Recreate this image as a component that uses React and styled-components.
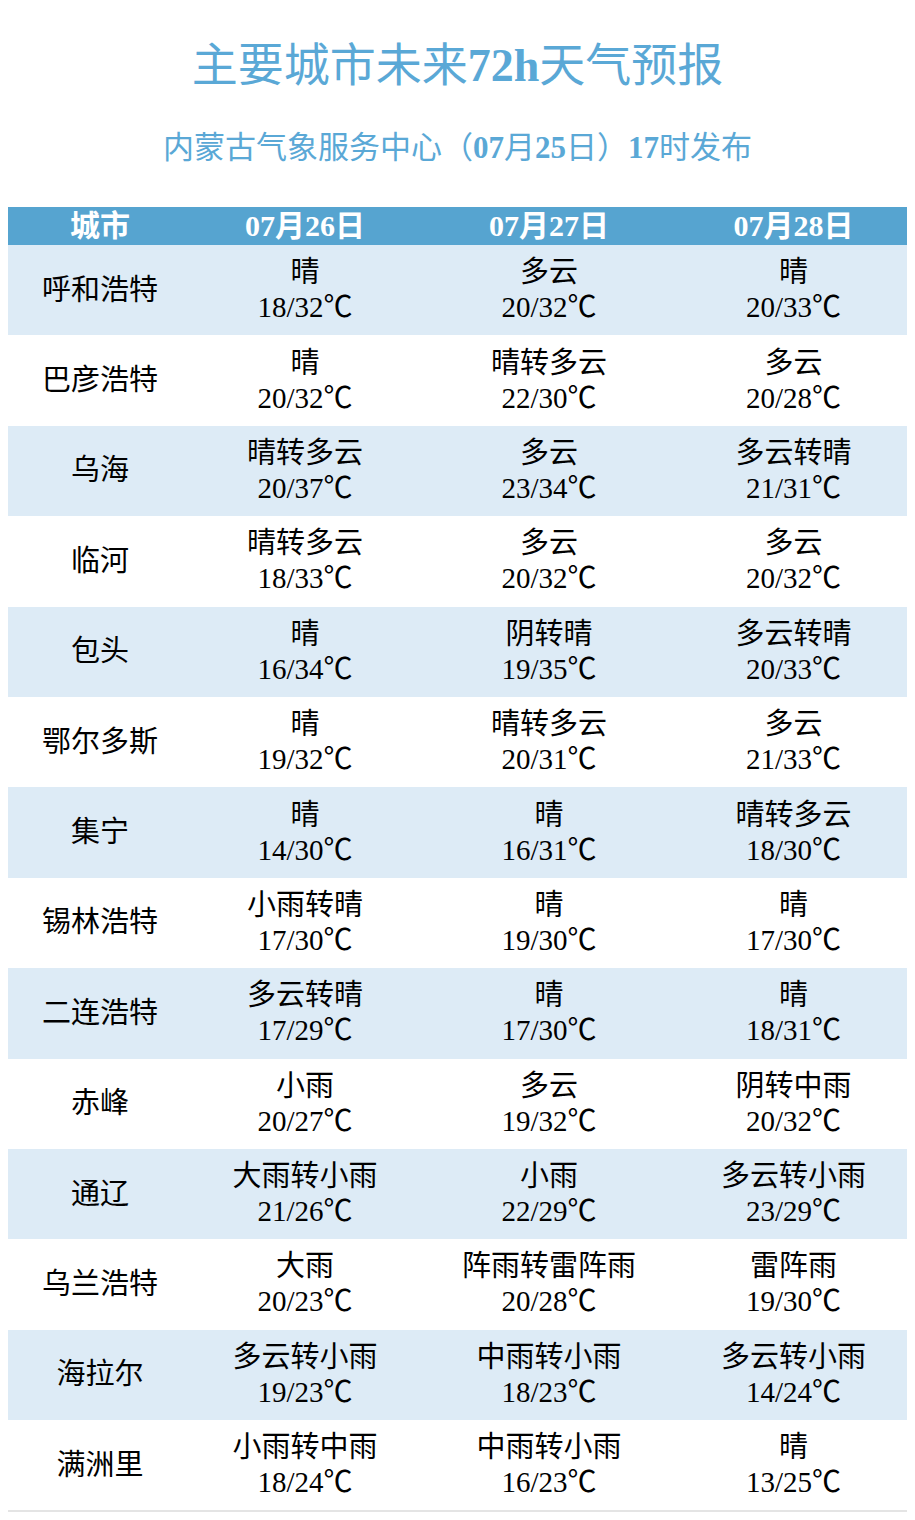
import React from "react";
import styled, { createGlobalStyle } from "styled-components";

const Global = createGlobalStyle`
  body {
    margin: 8px;
    background: #ffffff;
    font-family: "Liberation Serif", "Noto Sans CJK SC", serif;
  }
`;

const Page = styled.div`
  width: 899px;
  display: flex;
  flex-direction: column;
`;

const Title = styled.h1`
  margin: 0;
  padding-top: 32px;
  height: 60px;
  line-height: 52px;
  text-align: center;
  font-size: 46px;
  font-weight: normal;
  color: #5aa8d6;
  b { font-weight: bold; }
`;

const Sub = styled.h2`
  margin: 0;
  margin-top: 28px;
  height: 40px;
  line-height: 40px;
  text-align: center;
  font-size: 31px;
  font-weight: normal;
  color: #5aa8d6;
  b { font-weight: bold; }
`;

const Table = styled.div`
  margin-top: 39px;
  display: grid;
  grid-template-columns: 184px 226px 262px 227px;
  border-bottom: 2px solid #e4e4e4;
`;

const HeadCell = styled.div`
  height: 38px;
  line-height: 38px;
  background: #56a4d0;
  color: #ffffff;
  font-weight: bold;
  font-size: 30px;
  text-align: center;
`;

const Cell = styled.div`
  height: 90.4px;
  background: ${(p) => (p.$alt ? "#ddebf6" : "#ffffff")};
  display: flex;
  flex-direction: column;
  align-items: center;
  justify-content: center;
  font-size: 29px;
  line-height: 35px;
  color: #000;
`;

const data = [
  ["呼和浩特", ["晴", "18/32"], ["多云", "20/32"], ["晴", "20/33"]],
  ["巴彦浩特", ["晴", "20/32"], ["晴转多云", "22/30"], ["多云", "20/28"]],
  ["乌海", ["晴转多云", "20/37"], ["多云", "23/34"], ["多云转晴", "21/31"]],
  ["临河", ["晴转多云", "18/33"], ["多云", "20/32"], ["多云", "20/32"]],
  ["包头", ["晴", "16/34"], ["阴转晴", "19/35"], ["多云转晴", "20/33"]],
  ["鄂尔多斯", ["晴", "19/32"], ["晴转多云", "20/31"], ["多云", "21/33"]],
  ["集宁", ["晴", "14/30"], ["晴", "16/31"], ["晴转多云", "18/30"]],
  ["锡林浩特", ["小雨转晴", "17/30"], ["晴", "19/30"], ["晴", "17/30"]],
  ["二连浩特", ["多云转晴", "17/29"], ["晴", "17/30"], ["晴", "18/31"]],
  ["赤峰", ["小雨", "20/27"], ["多云", "19/32"], ["阴转中雨", "20/32"]],
  ["通辽", ["大雨转小雨", "21/26"], ["小雨", "22/29"], ["多云转小雨", "23/29"]],
  ["乌兰浩特", ["大雨", "20/23"], ["阵雨转雷阵雨", "20/28"], ["雷阵雨", "19/30"]],
  ["海拉尔", ["多云转小雨", "19/23"], ["中雨转小雨", "18/23"], ["多云转小雨", "14/24"]],
  ["满洲里", ["小雨转中雨", "18/24"], ["中雨转小雨", "16/23"], ["晴", "13/25"]],
];

export default function App() {
  return (
    <Page>
      <Global />
      <Title>主要城市未来<b>72h</b>天气预报</Title>
      <Sub>内蒙古气象服务中心（<b>07</b>月<b>25</b>日）<b>17</b>时发布</Sub>
      <Table>
        <HeadCell>城市</HeadCell>
        <HeadCell>07月26日</HeadCell>
        <HeadCell>07月27日</HeadCell>
        <HeadCell>07月28日</HeadCell>
        {data.map((row, i) => {
          const alt = i % 2 === 0;
          return (
            <React.Fragment key={row[0]}>
              <Cell $alt={alt}>{row[0]}</Cell>
              {row.slice(1).map((d, j) => (
                <Cell $alt={alt} key={j}>
                  <span>{d[0]}</span>
                  <span>{d[1]}℃</span>
                </Cell>
              ))}
            </React.Fragment>
          );
        })}
      </Table>
    </Page>
  );
}
